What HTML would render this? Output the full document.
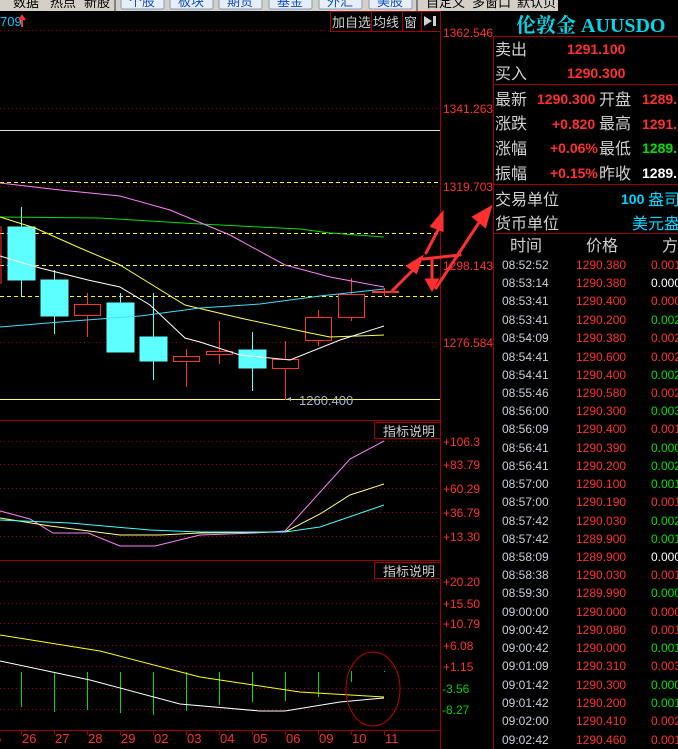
<!DOCTYPE html>
<html><head><meta charset="utf-8"><style>
html,body{margin:0;padding:0;background:#000;width:678px;height:749px;overflow:hidden}
svg{display:block}
text{font-family:"Liberation Sans","Noto Sans CJK SC",sans-serif}
</style></head><body>
<svg width="678" height="749" xmlns="http://www.w3.org/2000/svg">
<rect width="678" height="749" fill="#000"/>
<rect x="0" y="0" width="678" height="11" fill="#d4d0c8"/>
<rect x="558" y="0" width="120" height="11" fill="#000"/>
<g font-size="13" fill="#000">
<text x="13" y="7">数据</text><text x="50" y="7">热点</text><text x="84" y="7">新股</text>
<text x="426" y="7">自定义</text><text x="472" y="7">多窗口</text><text x="517" y="7">默认页</text>
</g>
<rect x="114" y="0" width="2" height="11" fill="#808080"/><rect x="416" y="0" width="2" height="11" fill="#808080"/>
<g fill="#e8eef8" stroke="#7f9db9">
<rect x="121" y="-4" width="43" height="13" rx="2"/><rect x="170" y="-4" width="43" height="13" rx="2"/>
<rect x="219" y="-4" width="43" height="13" rx="2"/><rect x="269" y="-4" width="43" height="13" rx="2"/>
<rect x="319" y="-4" width="43" height="13" rx="2"/><rect x="369" y="-4" width="43" height="13" rx="2"/>
</g>
<g font-size="13" fill="#1050c0" text-anchor="middle">
<text x="142" y="6">个股</text><text x="191" y="6">板块</text><text x="240" y="6">期货</text><text x="290" y="6">基金</text><text x="340" y="6">外汇</text><text x="390" y="6">美股</text>
</g>
<text x="0" y="26" font-size="13" fill="#00c8ff">709</text>
<path d="M22 27V17M19 20l3-4 3 4" stroke="#ff3030" stroke-width="2" fill="#ff3030"/>
<g stroke="#a00000" fill="none"><rect x="330.5" y="11.5" width="110" height="20"/><path d="M371.5 11v20M402.5 11v20M421.5 11v20"/></g>
<g font-size="13" fill="#d0d0d0"><text x="332" y="27">加自选</text><text x="373" y="27">均线</text><text x="404" y="27">窗</text></g>
<path d="M424 16l8 5-8 5z" fill="#d0d0d0"/><rect x="433" y="16" width="3" height="10" fill="#d0d0d0"/>
<g stroke="#a00000" stroke-dasharray="1,3" stroke-width="1">
<path d="M0 30.5H330M0 108.5H440M0 186.5H440M0 342.5H440"/>
<path d="M0 441.5H440M0 464.5H440M0 488.5H440M0 512.5H440M0 536.5H440"/>
<path d="M0 581.5H440M0 603.5H440M0 623.5H440M0 645.5H440M0 666.5H440M0 688.5H440M0 709.5H440"/>
</g>
<g stroke="#ffff00" stroke-dasharray="4,3"><path d="M0 182.5H440M0 233.5H440M0 265.5H440M0 296.5H440"/></g>
<path d="M0 130.5H440" stroke="#e0e0e0"/>
<path d="M0 399.5H440" stroke="#ffff60"/>
<g stroke="#a00000" fill="none">
<path d="M440.5 11V749M0 420.5H440M0 560.5H440M0 730.5H440"/>
<rect x="374.5" y="422.5" width="66" height="16"/><rect x="374.5" y="562.5" width="66" height="16"/>
</g>
<g font-size="13" fill="#d0d0d0"><text x="383" y="436">指标说明</text><text x="383" y="576">指标说明</text></g>
<g font-size="12" fill="#ff3030">
<text x="443" y="37">1362.546</text><text x="443" y="113">1341.263</text><text x="443" y="191">1319.703</text>
<text x="443" y="270">1298.143</text><text x="443" y="347">1276.584</text>
<text x="443" y="446">+106.3</text><text x="443" y="469">+83.79</text><text x="443" y="493">+60.29</text><text x="443" y="517">+36.79</text><text x="443" y="541">+13.30</text>
<text x="443" y="586">+20.20</text><text x="443" y="608">+15.50</text><text x="443" y="628">+10.79</text><text x="443" y="650">+6.08</text><text x="443" y="671">+1.15</text>
</g>
<g font-size="12" fill="#00d000"><text x="442" y="693">-3.56</text><text x="442" y="714">-8.27</text></g>
<g stroke="#5effff" fill="#5effff">
<path d="M21.5 207v89M54.5 270v64M120.5 293v59M153.5 293v87M252.5 332v59"/>
<rect x="8" y="227" width="27" height="53"/><rect x="41" y="280" width="27" height="36"/>
<rect x="107" y="303" width="27" height="49"/><rect x="140" y="337" width="27" height="24"/><rect x="239" y="350" width="27" height="18"/>
</g>
<g stroke="#ff3030" fill="#000">
<path d="M87.5 293v44M186.5 349v38M219.5 321v43M285.5 341v59M318.5 310v36M351.5 278v43M384.5 288v8"/>
<rect x="74.5" y="304.5" width="26" height="11"/><rect x="173.5" y="356.5" width="26" height="5"/>
<rect x="206.5" y="351.5" width="26" height="3"/><rect x="272.5" y="359.5" width="26" height="9"/>
<rect x="305.5" y="317.5" width="26" height="23"/><rect x="338.5" y="294.5" width="26" height="23"/>
<rect x="372.5" y="291.5" width="26" height="1"/>
<path d="M1 226v58"/>
</g>
<g fill="none" stroke-width="1">
<polyline stroke="#00e000" points="0,217 100,218 200,224 300,229 330,233 384,237"/>
<polyline stroke="#ff80ff" points="0,183 60,190 120,196 170,210 230,235 285,265 330,277 384,287"/>
<polyline stroke="#ffff40" points="0,217 35,228 80,248 120,265 185,305 240,318 310,333 330,337 384,335"/>
<polyline stroke="#ffffff" points="0,256 40,268 88,280 120,287 150,305 185,338 200,342 240,355 290,360 340,340 384,326"/>
<polyline stroke="#40e0ff" points="0,327 60,322 140,316 200,308 260,304 320,296 384,289"/>
</g>
<text x="299" y="405" font-size="13" fill="#a0b8d0">1260.400</text>
<path d="M287 399l4-2v4z" fill="#a0b8d0"/>
<g stroke="#ff3030" stroke-width="3" fill="#ff3030" stroke-linecap="round">
<path d="M392 291L415 268"/><path d="M408 266l13-8-5 14z"/>
<path d="M426 253L439 228"/><path d="M432 226l10-12 0 16z"/>
<path d="M432 259V283"/><path d="M427 280l5 9 5-9z"/>
<path d="M423 259L460 255"/>
<path d="M436 288L482 218"/><path d="M474 217l16-9-5 18z"/>
</g>
<g fill="none">
<polyline stroke="#ff80ff" points="0,511 30,519 53,533 88,533 120,546 155,546 200,535 255,533 285,531 350,459 384,441"/>
<polyline stroke="#ffff80" points="0,518 50,526 120,535 160,535 200,533 285,532 320,514 350,495 384,484"/>
<polyline stroke="#40ffff" points="0,520 70,523 150,530 200,532 285,532 320,527 384,505"/>
</g>
<g stroke="#00e000"><path d="M21.5 672v35M54.5 672v40M87.5 672v38M120.5 672v41M153.5 672v43M186.5 672v39M219.5 672v33M252.5 672v30M285.5 672v29M318.5 672v25M351.5 671v11M384.5 671v1"/></g>
<polyline fill="none" stroke="#ffff00" points="0,635 100,651 200,677 300,692 384,697"/>
<polyline fill="none" stroke="#ffffff" points="0,661 90,680 180,704 260,711 285,711 340,702 384,698"/>
<ellipse cx="373" cy="689" rx="27" ry="37" fill="none" stroke="#c00000"/>
<g stroke="#a00000"><path d="M21.5 730v5M54.5 730v5M87.5 730v5M120.5 730v5M153.5 730v5M186.5 730v5M219.5 730v5M252.5 730v5M285.5 730v5M318.5 730v5M351.5 730v5M384.5 730v5"/></g>
<g font-size="13" fill="#ff3030">
<text x="-6" y="743">5</text><text x="22" y="743">26</text><text x="55" y="743">27</text><text x="88" y="743">28</text><text x="121" y="743">29</text><text x="154" y="743">02</text><text x="187" y="743">03</text><text x="220" y="743">04</text><text x="253" y="743">05</text><text x="286" y="743">06</text><text x="319" y="743">09</text><text x="352" y="743">10</text><text x="385" y="743">11</text>
</g>
<text x="516" y="32" font-size="20" font-weight="bold" fill="#00d8e8" style="font-family:'Liberation Serif','Noto Serif CJK SC',serif">伦敦金 AUUSDO</text>
<g stroke="#a00000" fill="none"><path d="M493.5 36V749M493 36.5H678M493 84.5H678M493 184.5H678M493 233.5H678"/></g>
<g font-size="16" fill="#d0d0d0">
<text x="495" y="55">卖出</text><text x="495" y="79">买入</text>
<text x="495" y="105">最新</text><text x="495" y="129">涨跌</text><text x="495" y="154">涨幅</text><text x="495" y="179">振幅</text>
<text x="599" y="105">开盘</text><text x="599" y="129">最高</text><text x="599" y="154">最低</text><text x="599" y="179">昨收</text>
<text x="495" y="205">交易单位</text><text x="495" y="229">货币单位</text>
<text x="510" y="251">时间</text><text x="586" y="251">价格</text><text x="662" y="251">方</text>
</g>
<g font-size="14" font-weight="bold" fill="#ff3030">
<text x="567" y="54">1291.100</text><text x="567" y="78">1290.300</text>
<text x="537" y="104">1290.300</text><text x="552" y="129">+0.820</text><text x="550" y="153">+0.06%</text><text x="550" y="178">+0.15%</text>
<text x="642" y="104">1289.</text><text x="642" y="129">1291.</text>
</g>
<text x="642" y="153" font-size="14" font-weight="bold" fill="#00e000">1289.</text>
<text x="642" y="178" font-size="14" font-weight="bold" fill="#ffffff">1289.</text>
<text x="621" y="204" font-size="14" font-weight="bold" fill="#00d8ff">100</text>
<text x="648" y="205" font-size="16" fill="#00d8ff">盎司</text>
<text x="632" y="229" font-size="16" fill="#00d8ff">美元盎</text>
<g font-size="12">
<g fill="#c8d0d8">
<text x="502" y="269">08:52:52</text><text x="502" y="287">08:53:14</text><text x="502" y="305">08:53:41</text><text x="502" y="324">08:53:41</text><text x="502" y="342">08:54:09</text><text x="502" y="361">08:54:41</text><text x="502" y="379">08:54:41</text><text x="502" y="397">08:55:46</text><text x="502" y="415">08:56:00</text><text x="502" y="433">08:56:09</text><text x="502" y="452">08:56:41</text><text x="502" y="470">08:56:41</text><text x="502" y="488">08:57:00</text><text x="502" y="506">08:57:00</text><text x="502" y="525">08:57:42</text><text x="502" y="543">08:57:42</text><text x="502" y="561">08:58:09</text><text x="502" y="579">08:58:38</text><text x="502" y="597">08:59:30</text><text x="502" y="616">09:00:00</text><text x="502" y="634">09:00:42</text><text x="502" y="652">09:00:42</text><text x="502" y="670">09:01:09</text><text x="502" y="689">09:01:42</text><text x="502" y="707">09:01:42</text><text x="502" y="725">09:02:00</text><text x="502" y="744">09:02:42</text>
</g>
<g fill="#ff3030">
<text x="576" y="269">1290.380</text><text x="576" y="287">1290.380</text><text x="576" y="305">1290.400</text><text x="576" y="324">1290.200</text><text x="576" y="342">1290.380</text><text x="576" y="361">1290.600</text><text x="576" y="379">1290.400</text><text x="576" y="397">1290.580</text><text x="576" y="415">1290.300</text><text x="576" y="433">1290.400</text><text x="576" y="452">1290.390</text><text x="576" y="470">1290.200</text><text x="576" y="488">1290.100</text><text x="576" y="506">1290.190</text><text x="576" y="525">1290.030</text><text x="576" y="543">1289.900</text><text x="576" y="561">1289.900</text><text x="576" y="579">1290.030</text><text x="576" y="597">1289.990</text><text x="576" y="616">1290.000</text><text x="576" y="634">1290.080</text><text x="576" y="652">1290.000</text><text x="576" y="670">1290.310</text><text x="576" y="689">1290.300</text><text x="576" y="707">1290.200</text><text x="576" y="725">1290.410</text><text x="576" y="744">1290.460</text>
</g>
<text x="651" y="269" fill="#ff3030">0.001</text><text x="651" y="287" fill="#ffffff">0.000</text><text x="651" y="305" fill="#ff3030">0.000</text><text x="651" y="324" fill="#00e000">0.002</text><text x="651" y="342" fill="#ff3030">0.002</text><text x="651" y="361" fill="#ff3030">0.002</text><text x="651" y="379" fill="#00e000">0.002</text><text x="651" y="397" fill="#ff3030">0.002</text><text x="651" y="415" fill="#00e000">0.003</text><text x="651" y="433" fill="#ff3030">0.001</text><text x="651" y="452" fill="#00e000">0.000</text><text x="651" y="470" fill="#00e000">0.002</text><text x="651" y="488" fill="#00e000">0.001</text><text x="651" y="506" fill="#ff3030">0.001</text><text x="651" y="525" fill="#00e000">0.002</text><text x="651" y="543" fill="#00e000">0.001</text><text x="651" y="561" fill="#ffffff">0.000</text><text x="651" y="579" fill="#ff3030">0.001</text><text x="651" y="597" fill="#00e000">0.000</text><text x="651" y="616" fill="#ff3030">0.000</text><text x="651" y="634" fill="#ff3030">0.001</text><text x="651" y="652" fill="#00e000">0.001</text><text x="651" y="670" fill="#ff3030">0.003</text><text x="651" y="689" fill="#00e000">0.000</text><text x="651" y="707" fill="#00e000">0.001</text><text x="651" y="725" fill="#ff3030">0.002</text><text x="651" y="744" fill="#ff3030">0.001</text>
</g>
</svg>
</body></html>
